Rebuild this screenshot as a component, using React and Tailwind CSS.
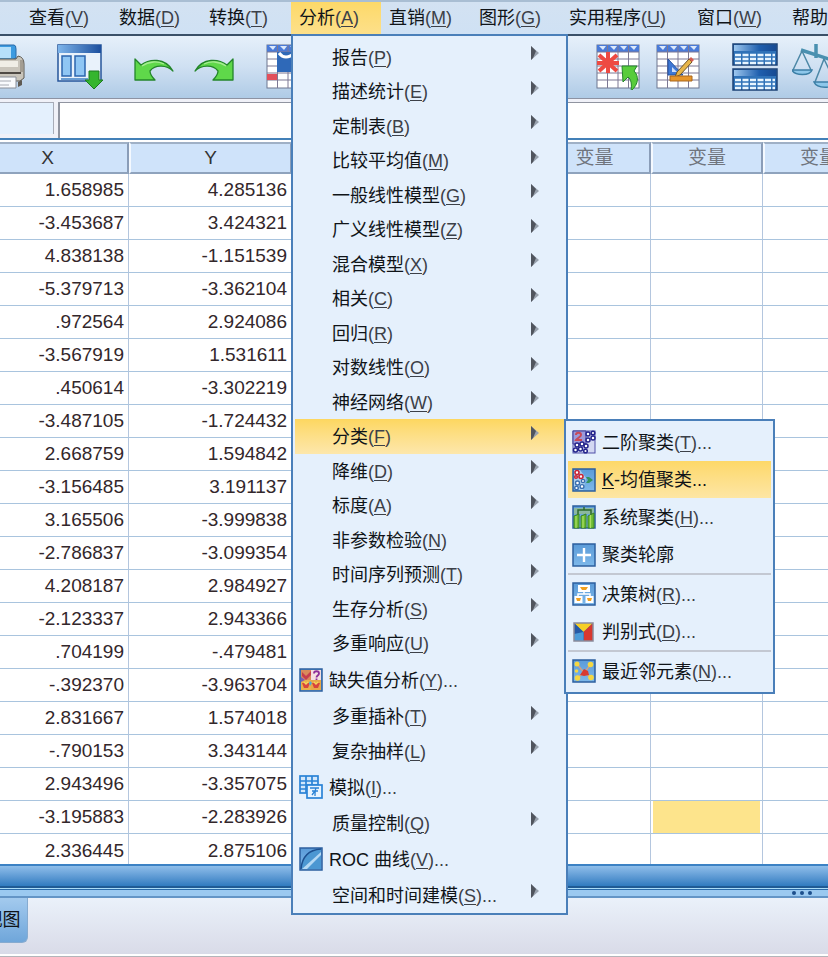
import React from "react";

const MENUS = [
  ["查看", "V"],
  ["数据", "D"],
  ["转换", "T"],
  ["分析", "A"],
  ["直销", "M"],
  ["图形", "G"],
  ["实用程序", "U", "w-[128px]"],
  ["窗口", "W", "w-[95px]"],
  ["帮助", "H"],
];

const ROWS = [
  ["1.658985", "4.285136"],
  ["-3.453687", "3.424321"],
  ["4.838138", "-1.151539"],
  ["-5.379713", "-3.362104"],
  [".972564", "2.924086"],
  ["-3.567919", "1.531611"],
  [".450614", "-3.302219"],
  ["-3.487105", "-1.724432"],
  ["2.668759", "1.594842"],
  ["-3.156485", "3.191137"],
  ["3.165506", "-3.999838"],
  ["-2.786837", "-3.099354"],
  ["4.208187", "2.984927"],
  ["-2.123337", "2.943366"],
  [".704199", "-.479481"],
  ["-.392370", "-3.963704"],
  ["2.831667", "1.574018"],
  ["-.790153", "3.343144"],
  ["2.943496", "-3.357075"],
  ["-3.195883", "-2.283926"],
  ["2.336445", "2.875106"],
];

const Frame = ({ id, children }) => (
  <svg viewBox="0 0 24 24" className="h-6 w-6 shrink-0" aria-hidden="true">
    <defs>
      <linearGradient id={id} x1="0" y1="0" x2="0" y2="1">
        <stop offset="0" stopColor="#5b9bd8" />
        <stop offset="1" stopColor="#7db8ea" />
      </linearGradient>
    </defs>
    <rect x="1" y="1" width="22" height="22" fill={`url(#${id})`} stroke="#2c5f9e" strokeWidth="1.5" />
    {children}
  </svg>
);

const MissingIcon = () => (
  <Frame id="missing">
    <path d="M2 2h10v10H2z" fill="#d98a5a" />
    <path d="M12 2h10v10H12z" fill="#f3dfe0" />
    <path d="M2 12h10v10H2z" fill="#e9b04a" />
    <path d="M12 12h10v10H12z" fill="#e8a848" />
    <path d="M3 4l4 4 5-5v4L7 12 3 8z" fill="#c63d4e" />
    <path d="M2 9l4 3-4 2z" fill="#7a5db5" />
    <path d="M15 5.500c0-3 5-3 5 0 0 2-2.500 2-2.500 4M17.500 10.500v1.500" fill="none" stroke="#8d2f99" strokeWidth="1.800" />
    <path d="M3 15h8l-2 5H5zM13 15h8l-2 5h-4z" fill="#d8453d" />
    <path d="M11 13l2 2-2 3-1-3z" fill="#49a8d8" />
    <path d="M5 14l2 2 2-2M15 14l2 2 2-2" stroke="#f7d35b" strokeWidth="1.300" fill="none" />
  </Frame>
);

const SimulateIcon = () => (
  <svg viewBox="0 0 24 24" className="h-6 w-6 shrink-0" fill="none" stroke="#2b83d6" strokeWidth="1.700" aria-hidden="true">
    <rect x="1" y="1" width="18" height="17" fill="#d3e8fb" />
    <path d="M1 6h18M1 10h18M1 14h18M7 1v17M13 1v17" />
    <rect x="8" y="10" width="15" height="13" fill="#e8f4ff" />
    <path d="M11 13h9M13 16h6M17 13c-1 2-1 3-1 8M13 20l3-4" strokeWidth="1.300" />
  </svg>
);

const RocIcon = () => (
  <Frame id="roc">
    <path d="M2 22C3 10 9 3 22 2v20z" fill="#4c97d2" />
    <path d="M2 22C3 10 9 3 22 2" fill="none" stroke="#1d4f8f" strokeWidth="1.500" />
    <path d="M3 22L22 5v3L8 22z" fill="#b4d8f4" />
  </Frame>
);

const TwoStepIcon = () => (
  <svg viewBox="0 0 24 24" className="h-6 w-6 shrink-0" aria-hidden="true">
    <rect x="1" y="1" width="22" height="22" fill="#d3d8f2" stroke="#5050a8" />
    <path d="M1 1h13v13H1z" fill="#9c9ada" stroke="#3c3c98" />
    <path d="M4 5c0-3 5-3 5 0 0 2-4 3-5 5h6" fill="none" stroke="#c84a58" strokeWidth="2" />
    <g fill="#fff" stroke="#24248c" strokeWidth="1.500">
      <circle cx="16" cy="4" r="2" />
      <circle cx="21" cy="3" r="1.800" />
      <circle cx="16" cy="10" r="2" />
      <circle cx="21" cy="8" r="2" />
      <circle cx="5" cy="15" r="2" />
      <circle cx="10" cy="14" r="2" />
      <circle cx="3.500" cy="20" r="2" />
      <circle cx="8.500" cy="19" r="2" />
      <circle cx="14" cy="16" r="2" />
      <circle cx="13.500" cy="21" r="1.800" />
    </g>
  </svg>
);

const KMeansIcon = () => (
  <Frame id="kmeans">
    <path d="M2 2h6l6 8-3 12H2z" fill="#a8cdec" />
    <g fill="#fff" stroke="#cc2434" strokeWidth="1.600">
      <circle cx="5" cy="4.500" r="2" />
      <circle cx="9" cy="8.500" r="2" />
      <circle cx="4" cy="9" r="1.300" />
    </g>
    <g fill="#fff" stroke="#3a6eb0" strokeWidth="1.400">
      <circle cx="11" cy="13" r="1.600" />
      <circle cx="5.500" cy="15" r="2" />
      <circle cx="4.500" cy="20" r="1.800" />
      <circle cx="10" cy="18.500" r="1.900" />
    </g>
    <path d="M14 9h3l4 3-4 3h-3l2-3z" fill="#34935c" />
  </Frame>
);

const HierarchyIcon = () => (
  <Frame id="hier">
    <path d="M2 3h20v6H2z" fill="#8ab8a0" />
    <path d="M6 10V5h13v5M12 5V2" fill="none" stroke="#2f6a2c" strokeWidth="1.500" />
    <path d="M2 11l5-2v14H2zM9 11l5-2v14H9zM16 11l6-3v15h-6z" fill="#6dbb33" stroke="#3a8325" />
    <path d="M4 11v12M11 11v12M18.500 10v13" stroke="#a9dd62" strokeWidth="1.300" />
  </Frame>
);

const SilhouetteIcon = () => (
  <Frame id="sil">
    <path d="M12 5v14M5 12h14" stroke="#fff" strokeWidth="2.400" />
  </Frame>
);

const TreeIcon = () => (
  <Frame id="tree">
    <path d="M12 8v4M6 16v-4h12v4" fill="none" stroke="#fff" strokeWidth="1.500" />
    <path d="M6 3h12v7H6zM2.500 14h8v7h-8zM13.500 14h8v7h-8z" fill="#fff" />
    <path d="M8 5h8l-2 3h-4zM4 16h5l-1 3H5zM15 16h5l-1 3h-3z" fill="#f0a020" />
  </Frame>
);

const DiscriminantIcon = () => (
  <svg viewBox="0 0 24 24" className="h-6 w-6 shrink-0" aria-hidden="true">
    <rect x="2" y="3" width="19" height="18" fill="#2e79c8" />
    <path d="M2 3h19l-9.500 9z" fill="#f6cf24" />
    <path d="M21 3v18h-9.500v-9z" fill="#d8382f" />
    <path d="M2 3l9.500 9v9H2z" fill="#2559a5" />
    <path d="M2 14l9.500-2v9H2z" fill="#4a9ad8" />
    <rect x="2" y="3" width="19" height="18" fill="none" stroke="#8a8a9a" strokeWidth="1.500" />
  </svg>
);

const NeighborIcon = () => (
  <Frame id="nn">
    <path d="M6 6l6 8 7-9M12 14l-7 5M12 14l7 5" stroke="#d7a27a" strokeWidth="1.300" fill="none" />
    <g fill="#f5d742">
      <circle cx="5" cy="5" r="2.500" />
      <circle cx="18.500" cy="5.500" r="2.800" />
      <circle cx="4.500" cy="12" r="1.800" />
      <circle cx="5.500" cy="19" r="2.800" />
      <circle cx="19" cy="18.500" r="2.800" />
    </g>
    <path d="M12 10l4 2 1 4-5 1-4-1z" fill="#d83a30" />
  </Frame>
);

const ANALYZE = [
  ["报告", "P"],
  ["描述统计", "E"],
  ["定制表", "B"],
  ["比较平均值", "M"],
  ["一般线性模型", "G"],
  ["广义线性模型", "Z"],
  ["混合模型", "X"],
  ["相关", "C"],
  ["回归", "R"],
  ["对数线性", "O"],
  ["神经网络", "W"],
  ["分类", "F"],
  ["降维", "D"],
  ["标度", "A"],
  ["非参数检验", "N"],
  ["时间序列预测", "T"],
  ["生存分析", "S"],
  ["多重响应", "U"],
  ["缺失值分析", "Y", MissingIcon],
  ["多重插补", "T"],
  ["复杂抽样", "L"],
  ["模拟", "I", SimulateIcon],
  ["质量控制", "Q"],
  ["ROC 曲线", "V", RocIcon],
  ["空间和时间建模", "S", null, "..."],
];

const CLASSIFY = [
  { label: "二阶聚类", k: "T", Icon: TwoStepIcon },
  { label: "-均值聚类...", lead: "K", Icon: KMeansIcon, active: true },
  { label: "系统聚类", k: "H", Icon: HierarchyIcon },
  { label: "聚类轮廓", Icon: SilhouetteIcon },
  { label: "决策树", k: "R", Icon: TreeIcon, sep: true },
  { label: "判别式", k: "D", Icon: DiscriminantIcon },
  { label: "最近邻元素", k: "N", Icon: NeighborIcon, sep: true },
];

const Key = ({ k, dots }) => (
  <span className="text-[#3c4048]">
    (<span className="underline decoration-1 underline-offset-2">{k}</span>){dots}
  </span>
);

const Arrow = () => (
  <svg viewBox="0 0 8 14" className="mb-2 h-[14px] w-2" aria-hidden="true">
    <path d="M0 0l8 7-8 7z" fill="#99a2ae" />
    <path d="M0 0l5 5-3 7-2 2z" fill="#50555e" />
  </svg>
);

function ClassifyMenu() {
  return (
    <ul role="menu" aria-label="分类" className="absolute top-0 left-full z-10 w-[211px] border-2 border-[#4a7fb9] bg-[#e5f0fc] p-[2px]">
      {CLASSIFY.map(({ label, k, lead, Icon, active, sep }) => (
        <li key={label} role="none" className={`group ${sep ? "border-t-2 border-[#c3c8d2]" : ""}`}>
          <button
            role="menuitem"
            className={`flex h-[37px] w-full items-center gap-[6px] pl-1 whitespace-nowrap group-odd:h-[38px] ${active ? "bg-linear-to-b from-[#fdd868] to-[#fde6a4]" : ""}`}
          >
            <Icon />
            <span className="pt-px">
              {lead && <span className="underline decoration-1 underline-offset-2">{lead}</span>}
              {label}
              {k && <Key k={k} dots="..." />}
            </span>
          </button>
        </li>
      ))}
    </ul>
  );
}

function AnalyzeMenu() {
  return (
    <ul role="menu" aria-label="分析" className="absolute top-full left-0 z-10 w-[277px] border-2 border-[#4a7fb9] bg-[#e5f0fc] px-[2px] pt-1 pb-px">
      {ANALYZE.map(([label, k, Icon, dots]) => {
        const open = label === "分类";
        return (
          <li key={label} role="none" className={Icon ? "h-[38px]" : "relative h-[34px] even:h-[35px]"}>
            <button
              role="menuitem"
              className={`flex h-full w-full items-center pr-[25px] whitespace-nowrap ${open ? "bg-linear-to-b from-[#fdd75f] to-[#fde7ab]" : ""} ${Icon ? "gap-[6px] pl-1" : "justify-between pl-[37px]"}`}
            >
              {Icon && <Icon />}
              <span className="pt-px">
                {label}
                <Key k={k} dots={Icon ? "..." : dots} />
              </span>
              {!Icon && <Arrow />}
            </button>
            {open && <ClassifyMenu />}
          </li>
        );
      })}
    </ul>
  );
}

function MenuBar() {
  return (
    <nav className="border-t-2 border-b-2 border-t-[#a9bed3] border-b-[#3a5068] bg-linear-to-b from-[#d3e2f2] to-[#cfe1f4]">
      <ul role="menubar" className="flex h-8 pl-[21px]">
        {MENUS.map(([label, k, width]) => (
          <li key={label} role="none" className={`relative shrink-0 ${width || "w-[90px]"}`}>
            <button
              role="menuitem"
              className={`flex h-full w-full items-center pl-2 whitespace-nowrap ${k === "A" ? "bg-linear-to-b from-[#fdd968] to-[#fde08a]" : ""}`}
            >
              <span>
                {label}
                <Key k={k} />
              </span>
            </button>
            {k === "A" && <AnalyzeMenu />}
          </li>
        ))}
      </ul>
    </nav>
  );
}

const GridBase = ({ children }) => (
  <svg viewBox="0 0 44 46" className="h-[46px] w-11" aria-hidden="true">
    <rect x="1" y="1" width="42" height="43" fill="#fff" stroke="#6d7690" />
    <path d="M1 1h42v7H1z" fill="#4a7bd8" />
    <path d="M3 2h7l-3 4zM14 2h7l-3 4zM24 2h7l-3 4zM34 2h7l-3 4z" fill="#dce9fb" />
    <path d="M1 8h42M1 15h42M1 22h42M1 29h42M1 36h42M11.500 1v43M22 1v43M32.500 1v43" stroke="#7c7894" fill="none" />
    {children}
  </svg>
);

const PrintIcon = () => (
  <svg viewBox="0 0 40 46" className="h-[46px] w-10" aria-hidden="true">
    <path d="M4 1h25q2 0 2 4v9l-4 2H2z" fill="#3d9be0" stroke="#2a6aa8" />
    <path d="M4 3h22v11H2z" fill="#b5e0fa" />
    <path d="M0 15h31l2-3q6 1 6 8v14l-4 3H0z" fill="#c9c5bb" stroke="#5f5a52" />
    <path d="M0 17h33v6H0z" fill="#f0eee6" />
    <path d="M0 29h36" stroke="#4f4a44" strokeWidth="2" />
    <path d="M35 16h3v12h-3z" fill="#a39d92" />
    <path d="M33 38l4-2v5l-4 2z" fill="#5f5a52" />
    <path d="M0 33h31v11H0z" fill="#f9fbfd" stroke="#8a8f98" />
    <path d="M10 37h16M10 41h14" stroke="#a6aab2" />
  </svg>
);

const RecallIcon = () => (
  <svg viewBox="0 0 46 46" className="h-[46px] w-[46px]" aria-hidden="true">
    <defs>
      <linearGradient id="recall">
        <stop offset="0" stopColor="#7db4ea" />
        <stop offset="1" stopColor="#1c4f9e" />
      </linearGradient>
    </defs>
    <rect x="1" y="1" width="43" height="36" fill="#e9f2fb" stroke="#26559a" strokeWidth="1.500" />
    <path d="M1 1h43v8H1z" fill="url(#recall)" />
    <path d="M5 12h9v20H5zM18 12h10v20H18z" fill="#8fc6f4" stroke="#2c66ae" strokeWidth="1.500" />
    <path d="M4 35h27" stroke="#3c7fc4" strokeWidth="1.500" />
    <path d="M32 27h10v9h4l-9 9-9-9h4z" fill="#35b52f" stroke="#1d7a20" />
  </svg>
);

const UndoIcon = ({ flip }) => (
  <svg viewBox="0 0 40 24" className={`mt-[6px] h-6 w-10 ${flip ? "-scale-x-100" : ""}`} aria-hidden="true">
    <path d="M1 1l6 6C15 1 31-1 39 13 33 7 21 6 16 13q0 4 5 9H1z" fill="#5fd84a" stroke="#23852a" strokeWidth="1.300" strokeLinejoin="round" />
    <path d="M8 8c7-5 16-5 22-2" stroke="#a5ec90" strokeWidth="1.300" fill="none" />
  </svg>
);

const GotoCaseIcon = () => (
  <GridBase>
    <path d="M1 30h10v6H1z" fill="#e2505c" />
    <path d="M11 8h32v20H11z" fill="#2f69b8" />
    <path d="M13 9q6 8 16 0" fill="none" stroke="#fff" strokeWidth="3" />
  </GridBase>
);

const GotoVarIcon = () => (
  <GridBase>
    <path d="M12 8v21M3 11l18 16M21 11L3 27M1 19h22" stroke="#ee4a42" strokeWidth="4" />
    <path d="M26 22h15l-3 5c5 5 5 13-3 20 1-7 0-12-3-14l-5 5z" fill="#58cc3c" stroke="#24862c" />
  </GridBase>
);

const VariablesIcon = () => (
  <GridBase>
    <path d="M12 15v16h15z" fill="#3f78d4" stroke="#2351a0" />
    <path d="M16 23v5h5z" fill="#cfe0f8" />
    <path d="M33 15l3 3-12 13-5 2 2-5z" fill="#e8b548" stroke="#6d5428" />
    <path d="M33 15l3 3 2-2-3-3z" fill="#d65c50" />
    <path d="M14 32h22v5H14z" fill="#e6952a" stroke="#a9661c" />
  </GridBase>
);

const SplitIcon = () => (
  <svg viewBox="0 0 46 48" className="h-12 w-[46px]" aria-hidden="true">
    <defs>
      <linearGradient id="split">
        <stop offset="0" stopColor="#9cc6ee" />
        <stop offset="0.6" stopColor="#1f5fae" />
        <stop offset="1" stopColor="#174a92" />
      </linearGradient>
    </defs>
    {[1, 26].map((y) => (
      <g key={y} transform={`translate(0 ${y})`}>
        <rect x="1" width="44" height="21" fill="#2f72b8" stroke="#1c4276" strokeWidth="1.500" />
        <path d="M2 1h42v6H2z" fill="url(#split)" />
        <path d="M3 11h40M3 15h40M3 19h40" stroke="#e8f5ff" strokeWidth="2.500" strokeDasharray="6 1.500" />
      </g>
    ))}
  </svg>
);

const ScaleIcon = () => (
  <svg viewBox="0 0 46 46" className="h-[46px] w-[46px]" fill="none" stroke="#4c87a6" strokeWidth="1.500" aria-hidden="true">
    <path d="M9 6l34 11M24 0v14" stroke="#4a90b0" strokeWidth="3.500" />
    <path d="M10 7L1 26M10 7l9 19M32 15l-9 23M32 15l11 23" />
    <path d="M0 26h20c-2 6-17 6-20 0zM22 38h22c-3 7-19 7-22 0z" fill="#8dc7ea" stroke="#3c7fa6" />
  </svg>
);

const TOOLS = [
  ["打印", PrintIcon, "-ml-[15px]"],
  ["重新调用对话框", RecallIcon, "ml-8"],
  ["撤消", UndoIcon, "ml-[31px]"],
  ["重做", () => <UndoIcon flip />, "ml-5"],
  ["转到个案", GotoCaseIcon, "ml-8"],
  ["转到变量", GotoVarIcon, "ml-[286px]"],
  ["变量", VariablesIcon, "ml-4"],
  ["拆分文件", SplitIcon, "ml-8"],
  ["加权个案", ScaleIcon, "ml-[14px]"],
];

function DataGrid() {
  const cell = "border-r border-b border-r-[#b4c6de] border-b-[#a9c4de]";
  return (
    <div className="overflow-hidden border-t-2 border-[#4380b8] bg-white pt-[2px]">
      <table className="-ml-[34px] w-[909px] table-fixed border-separate border-spacing-0">
        <colgroup>
          <col className="w-[163px]" />
          <col className="w-[163px]" />
          <col className="w-[134px]" />
          <col className="w-[112px]" />
          <col className="w-[113px]" />
          <col className="w-[112px]" />
          <col className="w-[112px]" />
        </colgroup>
        <thead>
          <tr className="h-8">
            {["X", "Y", "", "", "变量", "变量", "变量"].map((name, i) => (
              <th key={i} scope="col" className={`border-2 border-t-[#9fb0c6] border-r-[#8a9db8] border-b-[#8fa3bd] border-l-[#f4f9ff] bg-[#cfe3fa] p-0 text-[19px] leading-5 font-normal ${i > 1 ? "text-[#70757e]" : "text-[#333]"}`}>
                {name}
              </th>
            ))}
          </tr>
        </thead>
        <tbody>
          {ROWS.map((row, r) => (
            <tr key={r} className="group h-[33px] text-[19px] leading-5 text-[#33272b] last:h-[30px]">
              {row.map((value, c) => (
                <td key={c} className={`${cell} p-0 pr-1 text-right group-last:border-b-0 group-last:pt-[3px]`}>{value}</td>
              ))}
              {[0, 1, 2, 3, 4].map((c) => (
                <td key={c} className={`${cell} p-0 group-last:border-b-0`}>
                  {r === 19 && c === 3 && <div className="mx-[2px] h-8 bg-[#fde48c]" />}
                </td>
              ))}
            </tr>
          ))}
        </tbody>
      </table>
    </div>
  );
}

export default function App() {
  return (
    <div className="flex min-h-screen flex-col overflow-hidden bg-[#eaf0f9] font-['Liberation_Sans','Noto_Sans_CJK_SC',sans-serif] text-[18px] leading-6 text-[#101418]">
      <MenuBar />
      <div role="toolbar" aria-label="工具栏" className="flex h-[62px] items-center overflow-hidden bg-linear-to-b from-[#e6f0fa] via-[#cfe0f2] to-[#afcbe6]">
        {TOOLS.map(([name, Icon, space]) => (
          <button key={name} aria-label={name} className={`shrink-0 ${space}`}>
            <Icon />
          </button>
        ))}
      </div>
      <div className="flex h-10 border-t border-[#8d93a3] bg-[#f0f1f8] pt-[3px]">
        <input aria-label="当前单元格" readOnly className="mb-1 w-[54px] shrink-0 border-t border-r border-[#a8acb8] bg-[#e4f0fd]" />
        <input aria-label="单元格值" className="ml-1 min-w-0 flex-1 border-t border-l-2 border-[#9094a0] bg-white px-2" />
      </div>
      <DataGrid />
      <div className="h-[22px] border-t-2 border-[#3c82c4] bg-linear-to-b from-[#8fbeea] to-[#2f7bc0]" />
      <div className="h-[4px] border-t-2 border-b border-t-[#1f5a94] border-b-[#2a6aa8] bg-[#a9dcf8]" />
      <div className="flex h-2 items-center justify-end gap-1 border-b-2 border-[#6495c6] bg-[#9bc9f0] pr-4">
        <span className="size-1 rounded-full bg-[#1d4f8c]" />
        <span className="size-1 rounded-full bg-[#1d4f8c]" />
        <span className="size-1 rounded-full bg-[#1d4f8c]" />
      </div>
      <div className="min-h-[60px] flex-1 border-b-2 border-[#b3b5ba] bg-white pb-[2px]">
        <div className="h-full min-h-[56px] bg-linear-to-b from-[#eaf1fa] to-[#d9dbe8]">
          <button className="-ml-[58px] flex h-[45px] w-[86px] items-center justify-center rounded-br-md border-r border-b border-[#86abd0] bg-linear-to-b from-[#a3caee] to-[#6fa6da] whitespace-nowrap">
            变量视图
          </button>
        </div>
      </div>
    </div>
  );
}
